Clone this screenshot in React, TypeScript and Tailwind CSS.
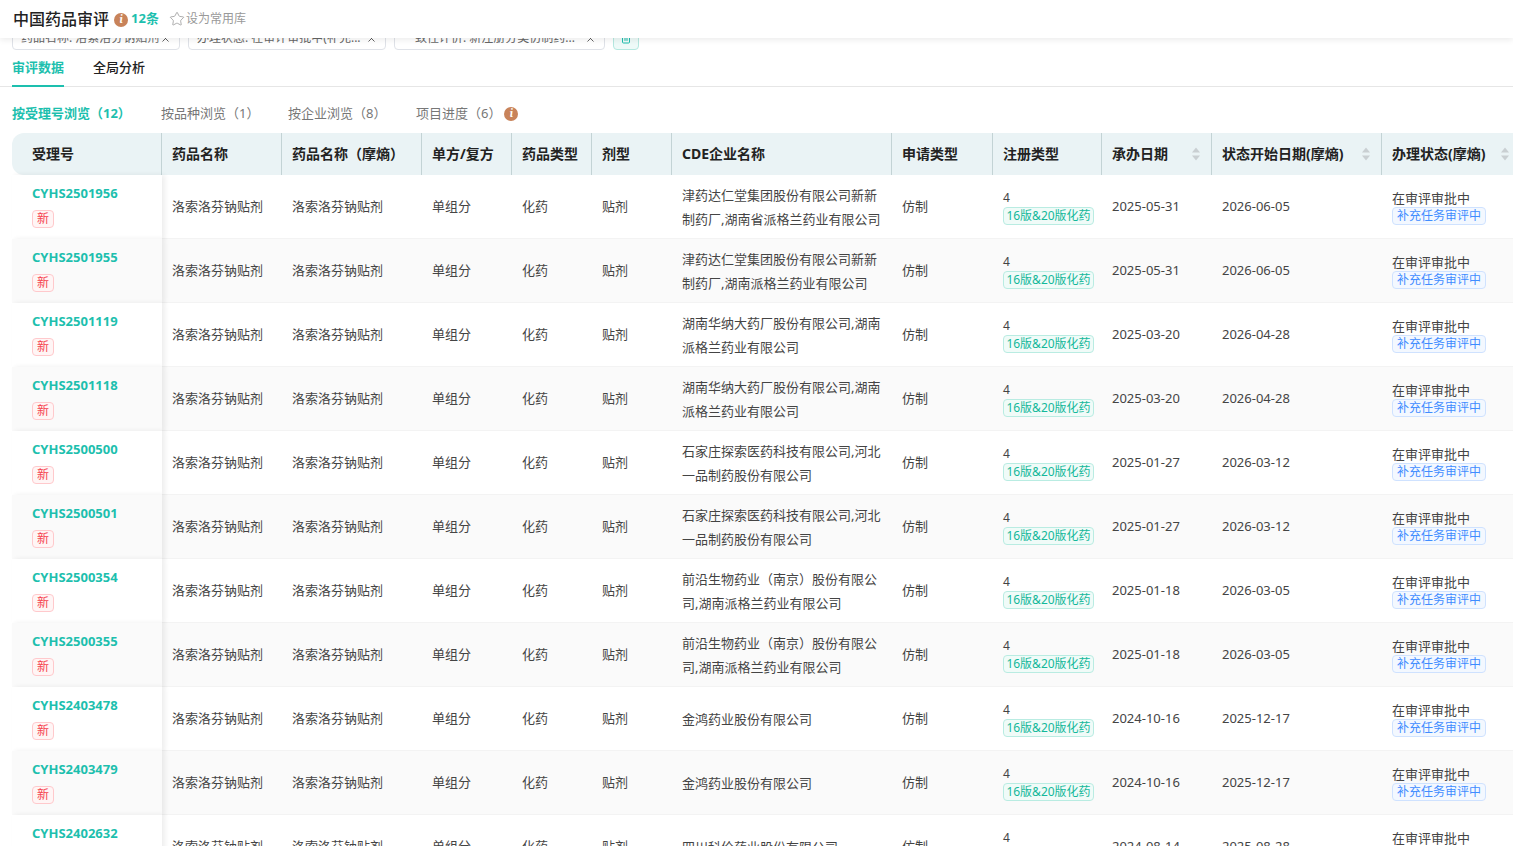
import React from 'react';
import { Star, X, Trash2 } from 'lucide-react';

const FONT = '"Noto Sans", "Noto Sans CJK SC", sans-serif';

const rows = [
  { id: 'CYHS2501956', company: ['津药达仁堂集团股份有限公司新新', '制药厂,湖南省派格兰药业有限公司'], start: '2025-05-31', status: '2026-06-05' },
  { id: 'CYHS2501955', company: ['津药达仁堂集团股份有限公司新新', '制药厂,湖南派格兰药业有限公司'], start: '2025-05-31', status: '2026-06-05' },
  { id: 'CYHS2501119', company: ['湖南华纳大药厂股份有限公司,湖南', '派格兰药业有限公司'], start: '2025-03-20', status: '2026-04-28' },
  { id: 'CYHS2501118', company: ['湖南华纳大药厂股份有限公司,湖南', '派格兰药业有限公司'], start: '2025-03-20', status: '2026-04-28' },
  { id: 'CYHS2500500', company: ['石家庄探索医药科技有限公司,河北', '一品制药股份有限公司'], start: '2025-01-27', status: '2026-03-12' },
  { id: 'CYHS2500501', company: ['石家庄探索医药科技有限公司,河北', '一品制药股份有限公司'], start: '2025-01-27', status: '2026-03-12' },
  { id: 'CYHS2500354', company: ['前沿生物药业（南京）股份有限公', '司,湖南派格兰药业有限公司'], start: '2025-01-18', status: '2026-03-05' },
  { id: 'CYHS2500355', company: ['前沿生物药业（南京）股份有限公', '司,湖南派格兰药业有限公司'], start: '2025-01-18', status: '2026-03-05' },
  { id: 'CYHS2403478', company: ['金鸿药业股份有限公司'], start: '2024-10-16', status: '2025-12-17' },
  { id: 'CYHS2403479', company: ['金鸿药业股份有限公司'], start: '2024-10-16', status: '2025-12-17' },
  { id: 'CYHS2402632', company: ['四川科伦药业股份有限公司'], start: '2024-08-14', status: '2025-08-28' },
];

const InfoDot = () => (
  <span className="inline-flex h-[14px] w-[14px] items-center justify-center rounded-full bg-[#c8835a] font-serif text-[11px] font-bold italic leading-none text-white">
    i
  </span>
);

const SortArrows = () => (
  <svg width="10" height="16" viewBox="0 0 10 16" className="shrink-0">
    <path d="M5 1.5 9 6.5H1z" fill="#c9cfd2" />
    <path d="M5 14.5 1 9.5h8z" fill="#c9cfd2" />
  </svg>
);

const Chip = ({ text, width }: { text: string; width: string }) => (
  <div className={`flex h-6 items-center justify-between rounded border border-[#dfe2e8] bg-white pl-2 pr-2 text-xs text-[#666] ${width}`}>
    <span className="truncate">{text}</span>
    <X size={11} strokeWidth={2} className="shrink-0 text-[#555]" />
  </div>
);

const Th = ({ label, sort, last }: { label: string; sort?: boolean; last?: boolean }) => (
  <th className={`h-[42px] bg-[#eaf3f5] p-0 text-left text-sm font-bold text-[#222] ${last ? '' : 'border-r border-[#c3d3d5]'}`}>
    <div className="flex items-center justify-between pl-2.5 pr-[10px]">
      <span>{label}</span>
      {sort && <SortArrows />}
    </div>
  </th>
);

const App = () => {
  return (
    <div className="h-[846px] w-[1513px] overflow-hidden bg-white text-[13px] text-[#444]" style={{ fontFamily: FONT }}>
      {/* Top title bar */}
      <header className="relative z-10 flex h-[38px] items-center bg-white pl-[13px] shadow-[0_2px_6px_rgba(0,0,0,0.08)]">
        <h1 className="text-base font-medium text-[#222]">中国药品审评</h1>
        <span className="ml-[5px]"><InfoDot /></span>
        <span className="ml-[3px] text-[13px] font-bold text-[#1dbfae]">12条</span>
        <Star size={16} strokeWidth={1.2} className="ml-[10px] text-[#999]" />
        <span className="ml-px text-xs text-[#999]">设为常用库</span>
      </header>

      {/* Filter chips, scrolled under the title bar */}
      <div className="-mt-3 flex items-center gap-2 pl-3">
        <Chip text="药品名称: 洛索洛芬钠贴剂" width="w-[168px]" />
        <Chip text="办理状态: 在审评审批中(补充..." width="w-[198px]" />
        <Chip text="一致性评价: 新注册分类仿制药..." width="w-[211px]" />
        <div className="flex h-6 w-[26px] items-center justify-center rounded border border-[#b5e8e0] bg-[#eefaf8]">
          <Trash2 size={12} className="text-[#1dbfae]" />
        </div>
      </div>

      {/* Main tabs */}
      <nav className="mt-[6px] flex h-[31px] gap-[29px] border-b border-[#e6e6e6] pl-3">
        <div className="relative pt-[2px] font-bold text-[#1dbfae]">
          审评数据
          <span className="absolute inset-x-0 -bottom-px h-0.5 bg-[#1dbfae]" />
        </div>
        <div className="pt-[2px] font-medium text-[#222]">全局分析</div>
      </nav>

      {/* Sub tabs */}
      <div className="flex h-[46px] items-center pl-3 pt-[7px] text-[#777]">
        <span className="w-[149px] font-bold text-[#1dbfae]">按受理号浏览（12）</span>
        <span className="w-[127px]">按品种浏览（1）</span>
        <span className="w-[128px]">按企业浏览（8）</span>
        <span className="mr-[3px]">项目进度（6）</span>
        <InfoDot />
      </div>

      {/* Data table */}
      <div className="ml-3">
        <table className="w-[1541px] table-fixed border-separate border-spacing-0">
          <colgroup>
            <col className="w-[150px]" />
            <col className="w-[120px]" />
            <col className="w-[140px]" />
            <col className="w-[90px]" />
            <col className="w-[80px]" />
            <col className="w-[80px]" />
            <col className="w-[220px]" />
            <col className="w-[101px]" />
            <col className="w-[109px]" />
            <col className="w-[110px]" />
            <col className="w-[170px]" />
            <col className="w-[171px]" />
          </colgroup>
          <thead>
            <tr>
              <th className="h-[42px] rounded-tl-xl rounded-bl-xl border-r border-[#c3d3d5] bg-[#eaf3f5] p-0 pl-5 text-left text-sm font-bold text-[#222]">受理号</th>
              <Th label="药品名称" />
              <Th label="药品名称（摩熵）" />
              <Th label="单方/复方" />
              <Th label="药品类型" />
              <Th label="剂型" />
              <Th label="CDE企业名称" />
              <Th label="申请类型" />
              <Th label="注册类型" />
              <Th label="承办日期" sort />
              <Th label="状态开始日期(摩熵)" sort />
              <th className="h-[42px] bg-[#eaf3f5] p-0 pl-2.5 text-left text-sm font-bold text-[#222]">
                <div className="flex items-center gap-[14px]">
                  <span>办理状态(摩熵)</span>
                  <SortArrows />
                </div>
              </th>
            </tr>
          </thead>
          <tbody>
            {rows.map((r, i) => {
              const bg = i % 2 === 1 ? 'bg-[#fafafa]' : 'bg-white';
              const td = `h-16 border-b border-[#f3f3f3] p-0 pl-2.5 align-middle ${bg}`;
              return (
                <tr key={r.id}>
                  <td className={`relative h-16 p-0 pl-5 align-top shadow-[3px_0_5px_rgba(0,0,0,0.07)] ${bg}`}>
                    <div className="mt-[7px] text-[13px] font-bold leading-[22px] text-[#1dbfae]">{r.id}</div>
                    <span className="mt-[6px] flex h-[18px] w-[22px] items-center justify-center rounded-sm border border-[#ffc9cc] bg-[#fff5f5] text-xs text-[#f5434f]">新</span>
                  </td>
                  <td className={td}>洛索洛芬钠贴剂</td>
                  <td className={td}>洛索洛芬钠贴剂</td>
                  <td className={td}>单组分</td>
                  <td className={td}>化药</td>
                  <td className={td}>贴剂</td>
                  <td className={`${td} leading-6`}>
                    {r.company.map((line) => (
                      <div key={line} className="whitespace-nowrap">{line}</div>
                    ))}
                  </td>
                  <td className={td}>仿制</td>
                  <td className={td}>
                    <div className="text-xs leading-[18px]">4</div>
                    <span className="flex h-[18px] w-[91px] items-center justify-center rounded-sm border border-[#b9ece2] bg-[#f0fbf8] text-xs text-[#14b89a]">16版&amp;20版化药</span>
                  </td>
                  <td className={td}>{r.start}</td>
                  <td className={td}>{r.status}</td>
                  <td className={td}>
                    <div className="leading-[18px]">在审评审批中</div>
                    <span className="flex h-[18px] w-[94px] items-center justify-center rounded-sm border border-[#cfe2ff] bg-[#f3f8ff] text-xs text-[#3f8cff]">补充任务审评中</span>
                  </td>
                </tr>
              );
            })}
          </tbody>
        </table>
      </div>
    </div>
  );
};

export default App;
